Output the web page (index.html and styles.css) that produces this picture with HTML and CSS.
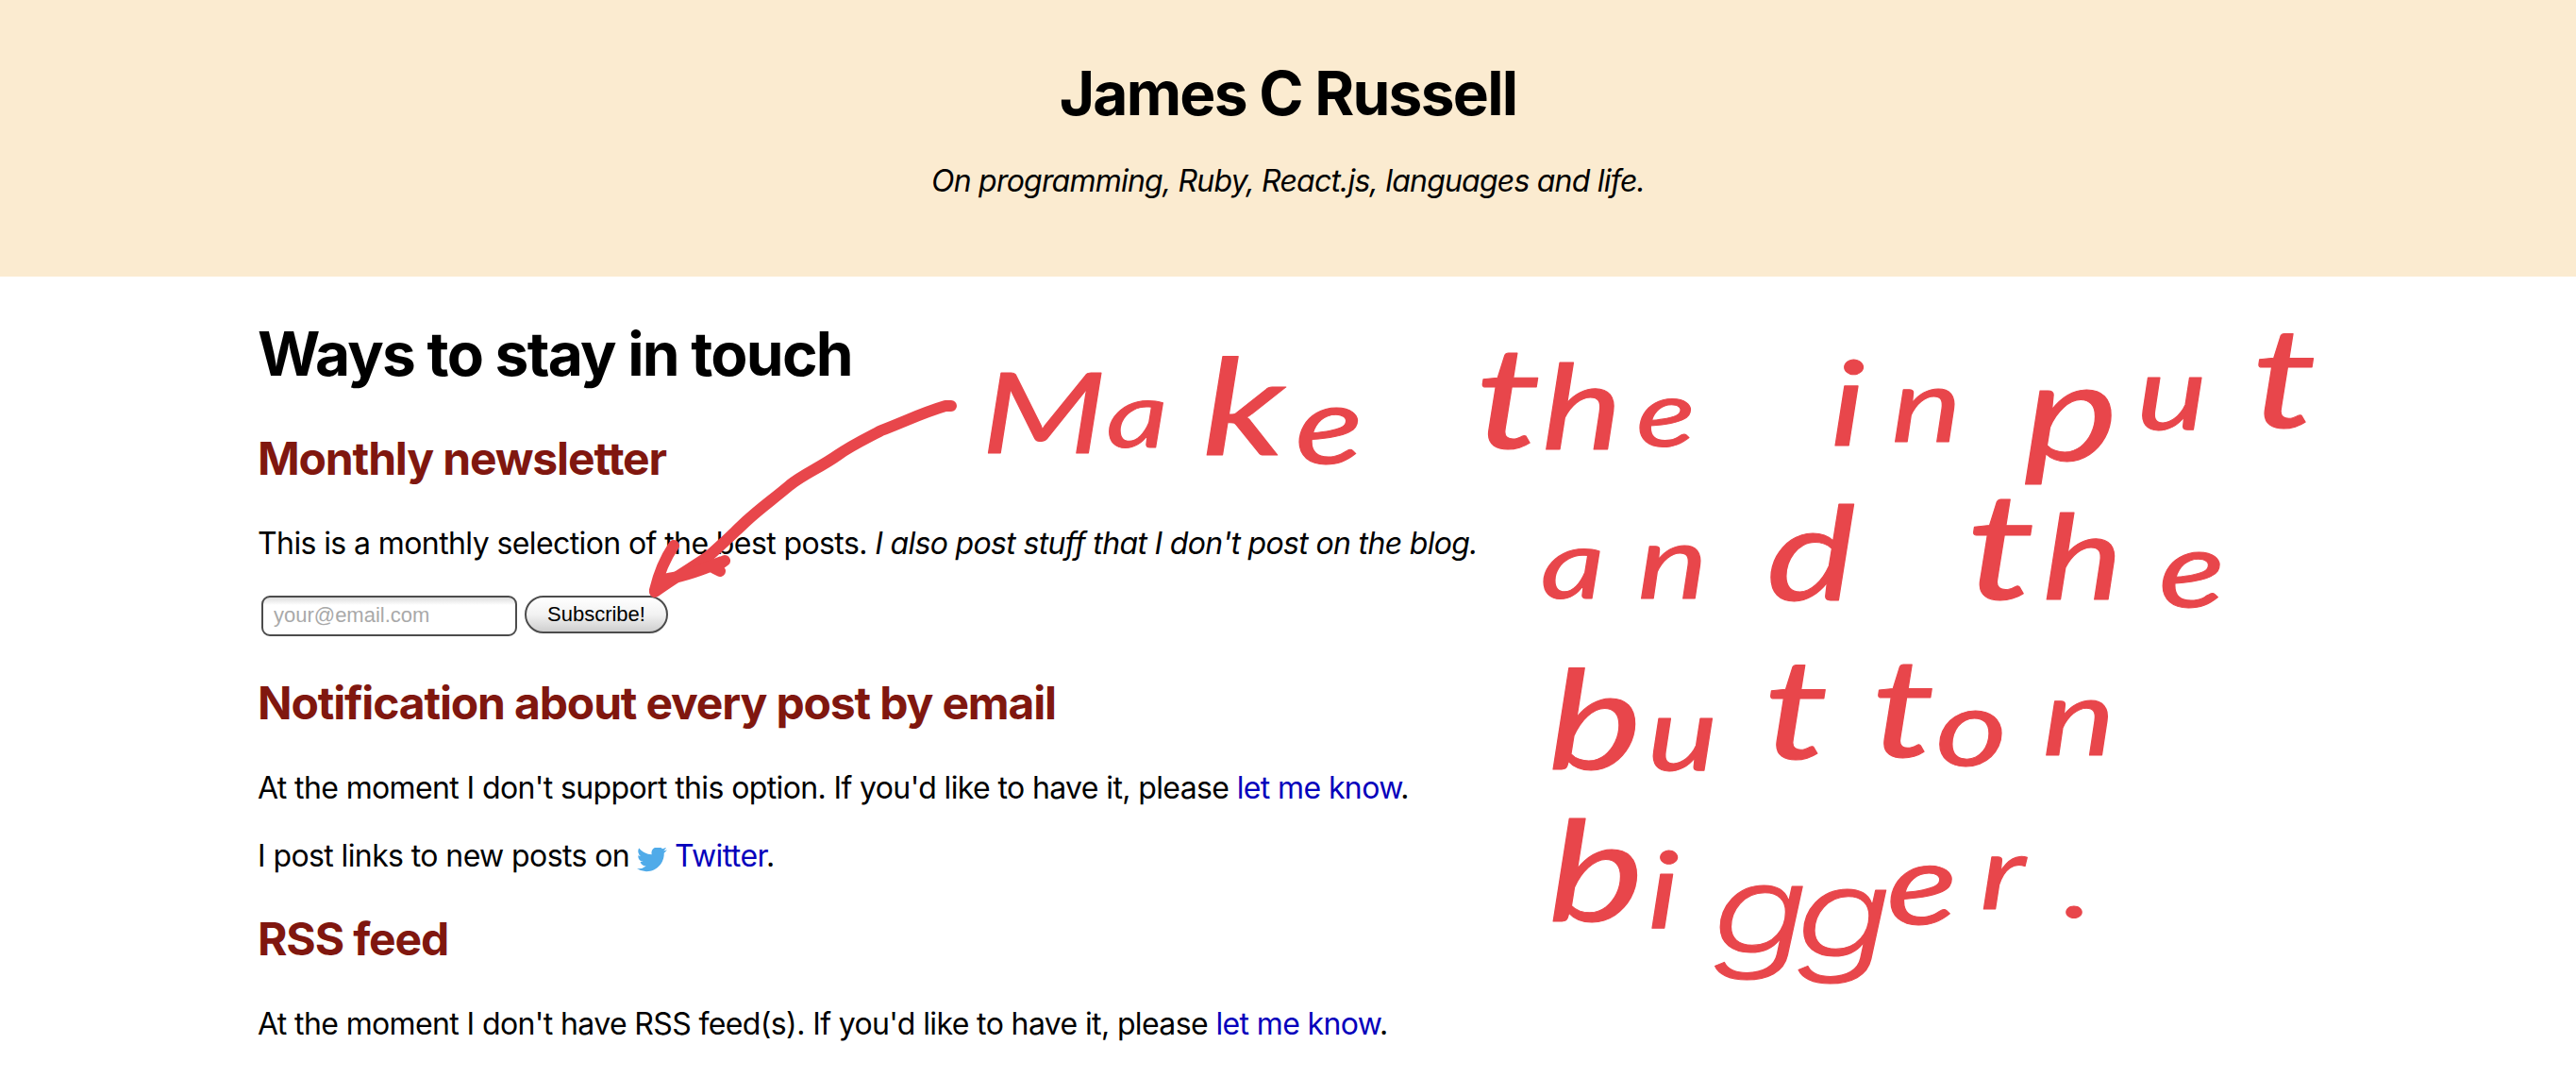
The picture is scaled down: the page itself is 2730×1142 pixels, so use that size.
FILE: index.html
```html
<!DOCTYPE html>
<html lang="en">
<head>
<meta charset="utf-8">
<title>James C Russell</title>
<link rel="stylesheet" href="styles.css">
</head>
<body>
<header class="site-header">
  <h1 class="site-title">James C Russell</h1>
  <p class="tagline"><em>On programming, Ruby, React.js, languages and life.</em></p>
</header>
<main class="content">
  <h1 class="page-title">Ways to stay in touch</h1>
  <h2>Monthly newsletter</h2>
  <p class="intro">This is a monthly selection of the best posts. <em>I also post stuff that I don't post on the blog.</em></p>
  <form class="subscribe">
    <input class="email" type="email" placeholder="your@email.com">
    <button class="submit" type="button">Subscribe!</button>
  </form>
  <h2>Notification about every post by email</h2>
  <p class="option">At the moment I don't support this option. If you'd like to have it, please <a href="#">let me know</a>.</p>
  <p class="social">I post links to new posts on
    <svg class="bird" viewBox="0 3 24 20" aria-hidden="true"><path d="M23.95 4.57a10 10 0 0 1-2.82.77 4.96 4.96 0 0 0 2.16-2.72c-.95.55-2 .95-3.12 1.18a4.92 4.92 0 0 0-8.39 4.48A13.97 13.97 0 0 1 1.64 3.16a4.92 4.92 0 0 0 1.52 6.57 4.9 4.9 0 0 1-2.23-.61v.06a4.92 4.92 0 0 0 3.95 4.83 5 5 0 0 1-2.21.08 4.94 4.94 0 0 0 4.6 3.42A9.87 9.87 0 0 1 0 19.54a13.99 13.99 0 0 0 7.55 2.21c9.05 0 14-7.5 14-13.98 0-.21 0-.42-.02-.63a9.94 9.94 0 0 0 2.46-2.55z"/></svg>
    <a href="#">Twitter</a>.</p>
  <h2 class="rss">RSS feed</h2>
  <p class="option">At the moment I don't have RSS feed(s). If you'd like to have it, please <a href="#">let me know</a>.</p>
</main>
<svg class="note" viewBox="0 0 2730 1142" width="2730" height="1142">
  <g class="arrow">
    <path d="M1008 430L1002 430C978 437 960 446 934 456C915 466 902 472 888 482C868 496 852 502 837 514C818 530 806 538 791 552C774 568 764 578 750 590C732 602 712 614 694 627"/>
    <path d="M714 578C706 590 698 608 694 625L708 613C728 610 745 603 768 594L757 602L763 605"/>
  </g>
  <g class="ink" transform="scale(1.3 1)">
    <text><tspan x="800" y="480" font-size="118">M</tspan><tspan x="902" y="474" font-size="98">a</tspan><tspan x="980" y="482" font-size="142">k</tspan><tspan x="1056" y="491" font-size="115">e</tspan></text>
    <text><tspan x="1203" y="475" font-size="150">t</tspan><tspan x="1257" y="475" font-size="124">h</tspan><tspan x="1334" y="473" font-size="100">e</tspan></text>
    <text><tspan x="1492" y="472" font-size="124">i</tspan><tspan x="1542" y="468" font-size="108">n</tspan><tspan x="1650" y="488" font-size="145">p</tspan><tspan x="1742" y="455" font-size="108">u</tspan><tspan x="1836" y="453" font-size="148">t</tspan></text>
    <text><tspan x="1256" y="634" font-size="102">a</tspan><tspan x="1335" y="634" font-size="108">n</tspan><tspan x="1440" y="635" font-size="138">d</tspan></text>
    <text><tspan x="1603" y="635" font-size="158">t</tspan><tspan x="1665" y="634" font-size="124">h</tspan><tspan x="1760" y="643" font-size="112">e</tspan></text>
    <text><tspan x="1262" y="815" font-size="145">b</tspan><tspan x="1343" y="816" font-size="108">u</tspan><tspan x="1438" y="804" font-size="148">t</tspan><tspan x="1526" y="802" font-size="145">t</tspan><tspan x="1578" y="811" font-size="112">o</tspan><tspan x="1665" y="800" font-size="112">n</tspan></text>
    <text><tspan x="1262" y="976" font-size="148">b</tspan><tspan x="1343" y="984" font-size="112">i</tspan><tspan class="loop" x="1396" y="1010" font-size="130">g</tspan><tspan class="loop" x="1464" y="1014" font-size="130">g</tspan><tspan x="1538" y="979" font-size="120">e</tspan><tspan x="1614" y="963" font-size="108">r</tspan><tspan x="1682" y="972" font-size="100">.</tspan></text>
  </g>
</svg>
</body>
</html>
```
FILE: styles.css
```css
body {
  margin: 0;
  position: relative;
  min-height: 1142px;
  overflow: hidden;
  background: #fff;
  color: #000;
  font: 32px/36px Inter, "Liberation Sans", sans-serif;
  letter-spacing: -0.6px;
}
h1, h2, p { margin: 0; }
h1 { font-size: 64px; line-height: 76px; font-weight: 700; letter-spacing: -1.75px; }
h2 { font-size: 48px; line-height: 56px; font-weight: 700; letter-spacing: -1.15px; color: #80170f; margin-top: 43.5px; }
a { color: #0600bc; text-decoration: none; }
em { letter-spacing: -0.67px; }
.site-header {
  box-sizing: border-box;
  height: 293px;
  padding-top: 61px;
  background: #fbebd0;
  text-align: center;
}
.tagline { margin-top: 37px; }
.tagline em { letter-spacing: -0.79px; }
.content { padding: 44px 273px 0; }
.content h2:first-of-type { margin-top: 45px; }
.content p { margin-top: 44px; white-space: nowrap; }
.content .option { letter-spacing: -0.62px; }
.subscribe { display: flex; gap: 8px; align-items: flex-start; margin: 36.5px 0 0 4px; }
.email, .submit {
  box-sizing: border-box;
  margin: 0;
  border: 2px solid #4c4c4c;
  font: 22px "Liberation Sans", sans-serif;
}
.email {
  width: 271px;
  height: 43px;
  padding: 0 11px;
  border-radius: 9px;
  background: linear-gradient(#ddd, #fff 8px);
}
.email::placeholder { color: #a9a9a9; }
.submit {
  width: 152px;
  height: 40px;
  padding: 0;
  border-radius: 20px;
  background: linear-gradient(#fff, #f2f2f2 50%, #cfcfcf);
  color: #000;
}
.content .social { height: 36px; margin-top: 36px; }
.content .rss { margin-top: 42px; }
.bird { width: 32px; height: 27px; margin-left: -1px; fill: #50abe9; vertical-align: -7px; }
.note { position: absolute; left: 0; top: 0; pointer-events: none; }
.arrow { fill: none; stroke: #e8464b; stroke-width: 12; stroke-linecap: round; stroke-linejoin: round; }
.ink {
  font-family: Lato, sans-serif;
  font-style: italic;
  letter-spacing: 0;
  fill: #e8464b;
  stroke: #e8464b;
  stroke-width: 1;
  stroke-linejoin: round;
}
.ink .loop { font-family: Inter, sans-serif; font-weight: 300; }
```
